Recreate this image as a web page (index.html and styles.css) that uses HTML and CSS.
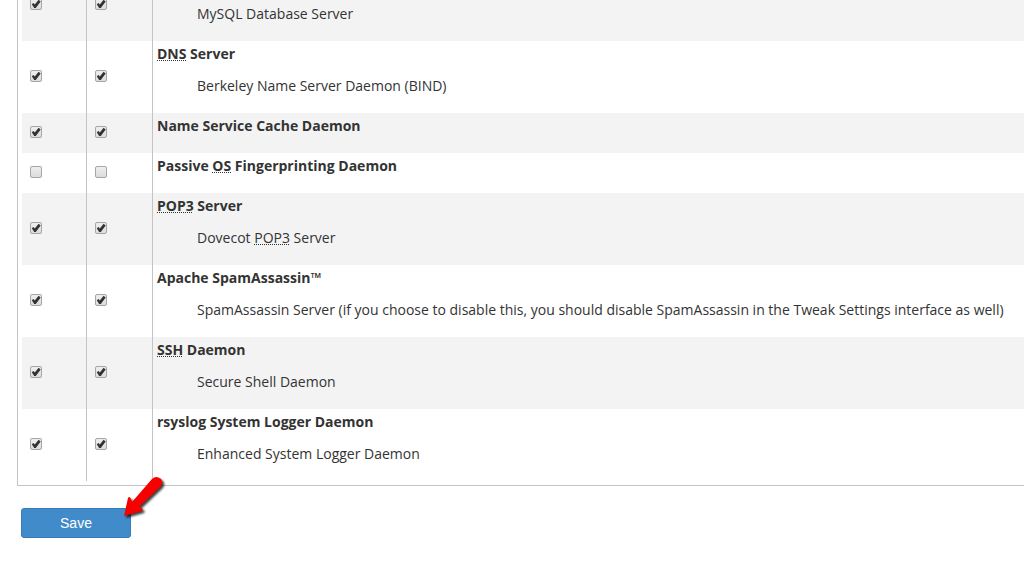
FILE: index.html
```html
<!DOCTYPE html>
<html lang="en">

<head>
    <meta charset="UTF-8">
    <meta name="viewport" content="width=device-width, initial-scale=1.0">
    <title>Save</title>
    <link rel="stylesheet" href="styles.css">
</head>

<body>
    <form>
        <div class="services">
            <table>
                <tbody>
                    <tr class="continued">
                        <td class="check"><input type="checkbox" aria-labelledby="mysql" checked></td>
                        <td class="check"><input type="checkbox" aria-labelledby="mysql" checked></td>
                        <td>
                            <p id="mysql">MySQL Database Server</p>
                        </td>
                    </tr>
                    <tr>
                        <td class="check"><input type="checkbox" aria-labelledby="dns" checked></td>
                        <td class="check"><input type="checkbox" aria-labelledby="dns" checked></td>
                        <td>
                            <h4 id="dns"><abbr>DNS</abbr> Server</h4>
                            <p>Berkeley Name Server Daemon (BIND)</p>
                        </td>
                    </tr>
                    <tr>
                        <td class="check"><input type="checkbox" aria-labelledby="nscd" checked></td>
                        <td class="check"><input type="checkbox" aria-labelledby="nscd" checked></td>
                        <td>
                            <h4 id="nscd">Name Service Cache Daemon</h4>
                        </td>
                    </tr>
                    <tr>
                        <td class="check"><input type="checkbox" aria-labelledby="p0f"></td>
                        <td class="check"><input type="checkbox" aria-labelledby="p0f"></td>
                        <td>
                            <h4 id="p0f">Passive <abbr>OS</abbr> Fingerprinting Daemon</h4>
                        </td>
                    </tr>
                    <tr>
                        <td class="check"><input type="checkbox" aria-labelledby="pop" checked></td>
                        <td class="check"><input type="checkbox" aria-labelledby="pop" checked></td>
                        <td>
                            <h4 id="pop"><abbr>POP3</abbr> Server</h4>
                            <p>Dovecot <abbr>POP3</abbr> Server</p>
                        </td>
                    </tr>
                    <tr>
                        <td class="check"><input type="checkbox" aria-labelledby="spamd" checked></td>
                        <td class="check"><input type="checkbox" aria-labelledby="spamd" checked></td>
                        <td>
                            <h4 id="spamd">Apache SpamAssassin™</h4>
                            <p>SpamAssassin Server (if you choose to disable this, you should disable SpamAssassin in the Tweak Settings interface as well)</p>
                        </td>
                    </tr>
                    <tr>
                        <td class="check"><input type="checkbox" aria-labelledby="ssh" checked></td>
                        <td class="check"><input type="checkbox" aria-labelledby="ssh" checked></td>
                        <td>
                            <h4 id="ssh"><abbr>SSH</abbr> Daemon</h4>
                            <p>Secure Shell Daemon</p>
                        </td>
                    </tr>
                    <tr>
                        <td class="check"><input type="checkbox" aria-labelledby="rsyslog" checked></td>
                        <td class="check"><input type="checkbox" aria-labelledby="rsyslog" checked></td>
                        <td>
                            <h4 id="rsyslog">rsyslog System Logger Daemon</h4>
                            <p>Enhanced System Logger Daemon</p>
                        </td>
                    </tr>
                </tbody>
            </table>
        </div>

        <div class="actions">
            <button type="submit">Save</button>
            <svg class="arrow" width="60" height="60" viewBox="0 0 60 60" aria-hidden="true">
                <path d="M9 46 L13 28 Q15 25 17 32 L37 9 Q41 5 46 9 Q49 13 45 17 L24 37 Q29 38 27 41 Z" />
            </svg>
        </div>
    </form>
</body>

</html>
```

FILE: styles.css
```css
body {
    margin: 0;
    overflow: hidden;
    background-color: #fff;
    color: #333;
    font-family: "Open Sans", sans-serif;
    font-size: 14px;
    line-height: 20px;
}

/* the list is scrolled, its first row starts above the window */
.services {
    margin: -31px 0 0 17px;
    padding: 0 0 4px 4px;
    border-left: 1px solid #c4c4c4;
    border-bottom: 1px solid #c4c4c4;
}

table {
    width: 100%;
    border-collapse: separate;
    border-spacing: 0;
    table-layout: fixed;
}

tr:nth-child(odd) {
    background-color: #f3f3f3;
}

td {
    padding: 3px 4px 17px;
    vertical-align: top;
}

td.check {
    box-sizing: border-box;
    width: 65px;
    padding: 0 8px 2px;
    border-right: 1px solid #c4c4c4;
    vertical-align: middle;
}

td.check + td.check {
    width: 66px;
}

.continued td:last-child {
    padding-top: 35px;
}

h4,
p {
    margin: 0;
}

h4 {
    font-size: 14px;
    font-weight: bold;
}

p {
    padding-left: 40px;
    white-space: nowrap;
}

h4 + p {
    margin-top: 12px;
}

abbr {
    text-decoration: underline dotted 1px;
    text-underline-offset: 1px;
    text-decoration-skip-ink: none;
}

input {
    appearance: none;
    display: block;
    box-sizing: border-box;
    width: 12px;
    height: 12px;
    margin: 0;
    border: 1px solid #a6a6a6;
    border-radius: 2px;
    background-image: linear-gradient(#eee, #dcdcdc);
}

input:checked::before {
    content: "";
    display: block;
    width: 10px;
    height: 10px;
    background-color: #333;
    clip-path: polygon(8% 52%, 24% 40%, 38% 54%, 76% 8%, 97% 24%, 48% 90%, 32% 90%);
}

.actions {
    position: relative;
    padding: 22px 21px;
}

button {
    display: block;
    width: 110px;
    height: 30px;
    padding: 0;
    border: 1px solid #357ebd;
    border-radius: 3px;
    background-color: #428bca;
    color: #fff;
    font-family: "Liberation Sans", Arial, sans-serif;
    font-size: 14px;
    cursor: pointer;
}

.arrow {
    position: absolute;
    top: -16px;
    left: 115px;
    fill: #f90000;
    filter: drop-shadow(2px 2px 1px rgba(0, 0, 0, 0.75));
    pointer-events: none;
}
```
